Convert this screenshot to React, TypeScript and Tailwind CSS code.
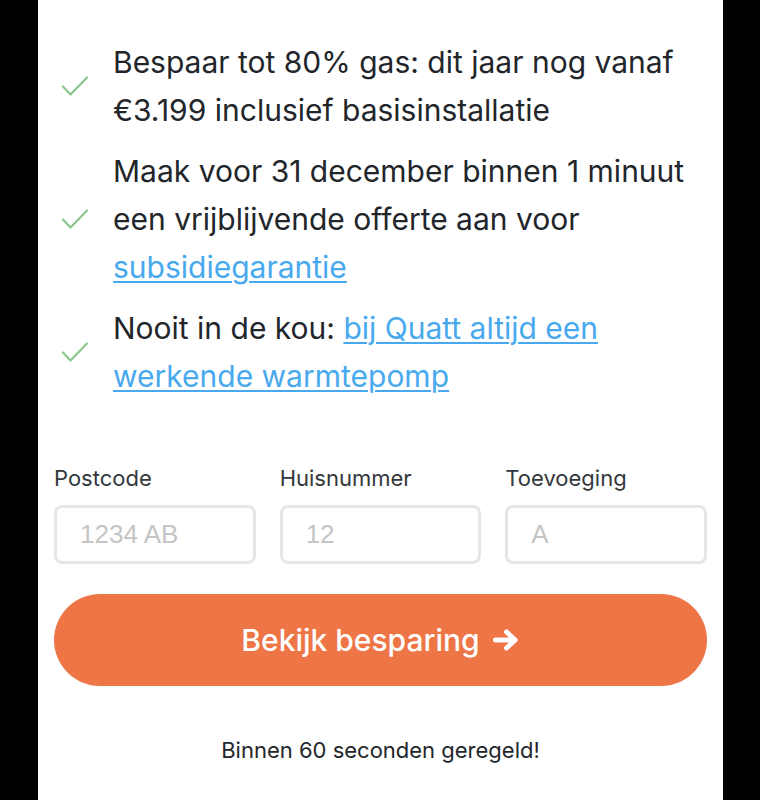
const font = { fontFamily: 'Inter, "Noto Sans", sans-serif' };

function Check() {
  return (
    <svg width="28" height="22" viewBox="0 0 28 22" fill="none" className="shrink-0">
      <path d="M2 11.5 L9.5 19.5 L26 2.5" stroke="#8cc58e" strokeWidth="2.2" strokeLinecap="round" strokeLinejoin="round" />
    </svg>
  );
}

function Item({ children }: { children: React.ReactNode }) {
  return (
    <li className="flex items-center">
      <div className="w-[59px] pl-[7px]">
        <Check />
      </div>
      <div className="flex-1 text-[30px] leading-[48px] text-[#22262b]">{children}</div>
    </li>
  );
}

function Field({ label, placeholder }: { label: string; placeholder: string }) {
  return (
    <label className="flex flex-col">
      <span className="text-[22px] leading-[26px] text-[#33373c] mb-[14px]">{label}</span>
      <input
        placeholder={placeholder}
        className="h-[59px] w-full rounded-[8px] border-[3px] border-[#e6e6e6] px-[23px] text-[26px] outline-none placeholder:text-[#c5c5c5]"
        style={{ fontFamily: '"Liberation Sans", Arial, sans-serif' }}
      />
    </label>
  );
}

export default function App() {
  return (
    <div className="min-h-[800px] bg-black" style={font}>
      <div className="ml-[38px] w-[685px] min-h-[800px] bg-white px-[16px] pt-[38px]">
        <ul className="flex flex-col gap-[13px]">
          <Item>
            Bespaar tot 80% gas: dit jaar nog vanaf €3.199 inclusief basisinstallatie
          </Item>
          <Item>
            Maak voor 31 december binnen 1 minuut een vrijblijvende offerte aan voor{' '}
            <a href="#" className="text-[#49a9ee] underline decoration-[2px] underline-offset-[3px]">subsidiegarantie</a>
          </Item>
          <Item>
            Nooit in de kou:{' '}
            <a href="#" className="text-[#49a9ee] underline decoration-[2px] underline-offset-[3px]">
              bij Quatt altijd een werkende warmtepomp
            </a>
          </Item>
        </ul>

        <div className="mt-[65px] grid grid-cols-3 gap-x-[24px]">
          <Field label="Postcode" placeholder="1234 AB" />
          <Field label="Huisnummer" placeholder="12" />
          <Field label="Toevoeging" placeholder="A" />
        </div>

        <button className="mt-[30px] flex h-[92px] w-full items-center justify-center gap-[12px] rounded-full bg-[#ed7546] text-[30px] font-medium text-white">
          Bekijk besparing
          <svg width="28" height="24" viewBox="0 0 26 22" fill="none">
            <path d="M3 11 H21 M13.5 3.5 L21.5 11 L13.5 18.5" stroke="white" strokeWidth="4.5" strokeLinecap="round" strokeLinejoin="round" />
          </svg>
        </button>

        <p className="mt-[48px] text-center text-[22px] text-[#22262b]">Binnen 60 seconden geregeld!</p>
      </div>
    </div>
  );
}
